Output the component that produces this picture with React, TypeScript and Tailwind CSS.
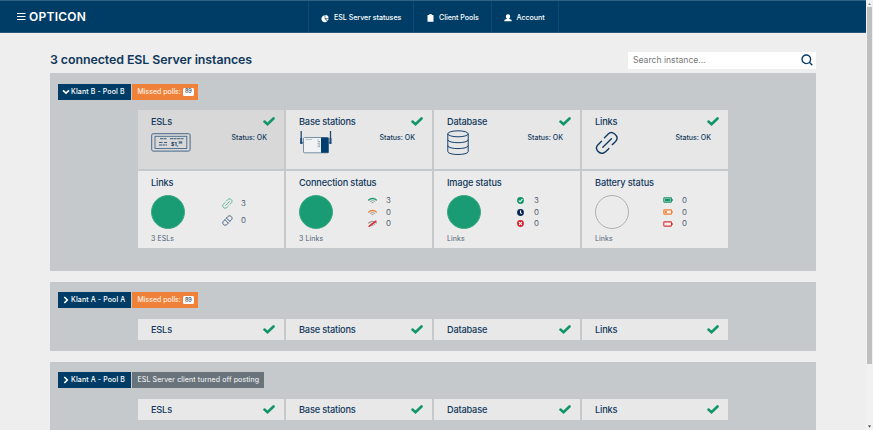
import type { ReactNode } from "react";

const CARD_NAMES = ["ESLs", "Base stations", "Database", "Links"];

function Check() {
  return (
    <svg viewBox="0 0 12 9" className="h-[9px] w-3 shrink-0">
      <path d="M1.5 4.6 4.5 7.2 10.5 1.5" fill="none" stroke="#11966b" strokeWidth="2.6" strokeLinecap="round" />
    </svg>
  );
}

function Chevron({ open }: { open?: boolean }) {
  return (
    <svg viewBox="0 0 8 8" className="size-2 shrink-0">
      <path d={open ? "M1 2.3 4 5.1 7 2.3" : "M2.3 1 5.3 4 2.3 7"} fill="none" stroke="#fff" strokeWidth="1.6" />
    </svg>
  );
}

function PieIcon() {
  return (
    <svg viewBox="0 0 9 9" className="h-[9px] w-[9px]" fill="#fff">
      <path d="M4.2.9V4.9l2.9 2.7A3.9 3.9 0 1 1 4.2.9Z" />
      <path d="M4.8.6A3.7 3.7 0 0 1 8.5 4.3H4.8ZM5.3 4.9h3.2A4 4 0 0 1 7.6 7Z" />
    </svg>
  );
}

function ClipboardIcon() {
  return (
    <svg viewBox="0 0 7 8" className="h-2 w-[7px]" fill="#fff">
      <rect x=".5" y="1" width="6" height="6.8" rx=".5" />
      <rect x="2.2" y="0" width="2.6" height="2" rx=".6" />
    </svg>
  );
}

function UserIcon() {
  return (
    <svg viewBox="0 0 8 8" className="size-2" fill="#fff">
      <path d="M4 .3c1.3 0 2.1.9 2.1 2.1 0 1-.4 1.8-1 2.2v.5l1.9.5c.5.2.7.6.7 1.7H.3c0-1.1.2-1.5.7-1.7l1.9-.5v-.5c-.6-.4-1-1.2-1-2.2C1.9 1.2 2.7.3 4 .3Z" />
    </svg>
  );
}

function LabelIcon() {
  return (
    <svg viewBox="0 0 40 19" className="h-[19px] w-10" fill="none" stroke="#45688a">
      <rect x=".7" y=".7" width="38.4" height="17.4" rx="1.5" strokeWidth="1" />
      <rect x="4" y="3.3" width="31.8" height="12.2" strokeWidth=".9" />
      <path d="M9 5.7h7M19 5.7h14M8 9.5h4M13 9.5h3M8 12h8" stroke="#234b70" strokeWidth=".9" strokeDasharray="3 .5" />
      <text x="20" y="12.7" fontSize="5.2" fontWeight="700" fill="#0d3a61" stroke="none">
        $1,<tspan fontSize="3" dy="-1.5">99</tspan>
      </text>
    </svg>
  );
}

function StationIcon() {
  return (
    <svg viewBox="0 0 33 26" className="h-[26px] w-[33px]" fill="none">
      <path d="M2.2 1v12.5M31.5 1v12.5" stroke="#1d4b76" strokeWidth="1.3" />
      <path d="M2.2 8v6M31.500 8v6" stroke="#1d4b76" strokeWidth="1.9" />
      <path d="M2.5 12.8h2M29.5 12.8h2" stroke="#1d4b76" />
      <rect x="4.5" y="7.5" width="25" height="15.3" rx="1" fill="#f1f2f3" stroke="#5d7790" strokeWidth=".8" />
      <path d="M22 7.5h7.5v15.3H22Z" fill="#003d70" />
      <path d="M6.5 9.5h6.5" stroke="#a7b2bd" strokeWidth=".8" />
      <path d="M19.2 9.5v8M20.6 11v6" stroke="#566d84" strokeWidth=".7" strokeDasharray="1 .7" />
    </svg>
  );
}

function DatabaseIcon() {
  return (
    <svg viewBox="0 0 22 26" className="h-[26px] w-[22px]" fill="none" stroke="#16426d" strokeWidth="1">
      <ellipse cx="11" cy="3.8" rx="10.2" ry="3" />
      <path d="M.8 3.800V21.500c0 4 20.400 4 20.400 0V3.800M.8 9.700c0 4 20.400 4 20.400 0M.8 15.600c0 4 20.400 4 20.400 0" />
    </svg>
  );
}

function ChainIcon({ className, color, broken }: { className: string; color: string; broken?: boolean }) {
  return (
    <svg viewBox="0 0 24 24" className={className} fill="none" stroke={color} strokeWidth={className === "size-6" ? 1.4 : 2} strokeLinecap="round">
      <path d="M9.5 6.8 13.2 3C17-.8 24 4.6 21.4 9.3c-.6 1.1-2.5 2.9-4.1 4.3M6.5 10.3 2.8 14C-1 18 4.6 24.2 9.3 21.6c1.3-.7 3-2.5 4.5-4" />
      {broken ? <path d="m6.5 10.3 7.3 7.3M9.5 6.8l7.8 6.8" /> : <path d="m7.8 16.2 8.6-8.4" />}
    </svg>
  );
}

function WifiIcon({ color, off }: { color: string; off?: boolean }) {
  return (
    <svg viewBox="0 0 9 7" className="h-[7px] w-[9px]" fill="none" strokeLinecap="round">
      <path d="M.7 3C2.7 1 6.3 1 8.3 3" stroke={off ? "#a99" : color} strokeWidth="1.3" />
      <path d="M2.2 4.4c1.3-1.1 3.3-1.1 4.6 0" stroke="#999" strokeWidth="1" />
      <path d="M3.9 5.6h1.2" stroke="#999" strokeWidth=".9" />
      {off && <path d="M1.2 6.3 7.9 1.2" stroke={color} strokeWidth="1.5" />}
    </svg>
  );
}

function DotIcon({ color, mark }: { color: string; mark: string }) {
  return (
    <svg viewBox="0 0 8 8" className="size-[7px]">
      <circle cx="4" cy="4" r="3.9" fill={color} />
      <path d={mark} fill="none" stroke="#fff" strokeWidth="1.2" />
    </svg>
  );
}

function BatteryIcon({ color, level }: { color: string; level: number }) {
  return (
    <svg viewBox="0 0 10 6" className="h-[6px] w-[10px]">
      <rect x=".8" y=".9" width="7.7" height="4.2" rx=".5" fill="#f7efec" stroke={color} strokeWidth="1.1" />
      <path d="M9.2 2v2" stroke={color} />
      <rect x="1.8" y="1.8" width={level} height="2.4" fill={color} />
    </svg>
  );
}

interface StatusCardProps {
  name: string;
  icon: ReactNode;
  active?: boolean;
}

function StatusCard({ name, icon, active }: StatusCardProps) {
  return (
    <div className={`h-[59.5px] pl-[13px] pr-[9px] pt-[6px] ${active ? "bg-[#d8d8d8]" : "bg-[#e7e7e7]"}`}>
      <div className="flex h-3 items-center justify-between">
        <h3 className="text-[9.2px] font-medium leading-3 tracking-[-0.18px]">{name}</h3>
        <Check />
      </div>
      <div className="flex justify-between">
        <div className="flex h-[30px] items-center">{icon}</div>
        <span className="mr-[8px] mt-[5px] text-[7px] font-medium leading-[10px]">Status: OK</span>
      </div>
    </div>
  );
}

interface ChartCardProps {
  name: string;
  caption: string;
  empty?: boolean;
  rows: { icon: ReactNode; value: number }[];
}

function ChartCard({ name, caption, empty, rows }: ChartCardProps) {
  return (
    <div className="h-[76.9px] bg-[#ebebeb] pl-[13px] pt-[5.5px]">
      <h3 className="text-[9.2px] font-medium leading-3 tracking-[-0.15px]">{name}</h3>
      <div className="mt-[6.5px] flex h-[34px]">
        <div className={`size-[34px] rounded-full ${empty ? "border-[1.5px] border-[#b0b0b0]" : "border border-[#3fa982] bg-[#199c73]"}`} />
        <div className={`flex flex-col justify-center ${rows.length === 2 ? "ml-[36px] gap-[6px]" : "ml-[33px] gap-[0.7px]"}`}>
          {rows.map((row, i) => (
            <div key={i} className="flex h-[11px] items-center">
              <span className="flex w-[12px] justify-center">{row.icon}</span>
              <span className="ml-[8px] text-[7.8px] leading-[11px] text-[#4d6073]">{row.value}</span>
            </div>
          ))}
        </div>
      </div>
      <p className="mt-[5px] text-[7px] leading-[9px] tracking-[0.08px] text-[#4d6073]">{caption}</p>
    </div>
  );
}

function PoolName({ name, open }: { name: string; open?: boolean }) {
  return (
    <div className="flex h-4 w-[72.5px] items-center gap-px bg-[#003d66] pl-[4px] text-[7px] font-medium text-white">
      <Chevron open={open} />
      <span className="whitespace-nowrap pt-px tracking-[0.12px]">{name}</span>
    </div>
  );
}

function MissedPolls() {
  return (
    <div className="flex h-4 w-[65.5px] items-center gap-[2px] bg-[#ef8138] pl-[5.5px] text-[7px] text-white">
      <span className="whitespace-nowrap pt-px">Missed polls:</span>
      <span className="flex h-2 w-[11px] items-center justify-center rounded-[1.5px] bg-white text-[5.5px] font-medium text-[#26364a]">89</span>
    </div>
  );
}

function PostingOff() {
  return (
    <div className="flex h-4 w-[131.5px] items-center bg-[#69737c] pl-[5.5px] text-[7px] text-white">
      <span className="whitespace-nowrap pt-px tracking-[0.11px]">ESL Server client turned off posting</span>
    </div>
  );
}

function CollapsedPool({ name, badge }: { name: string; badge: ReactNode }) {
  return (
    <section className="mt-[11px] h-[69px] bg-[#c5c9cc] pt-[10px]">
      <div className="ml-2 flex gap-[1.5px]">
        <PoolName name={name} />
        {badge}
      </div>
      <div className="ml-[88px] mt-[10.5px] grid w-[590px] grid-cols-4 gap-[2px]">
        {CARD_NAMES.map((card) => (
          <div key={card} className="flex h-[21.5px] items-center justify-between bg-[#e8e8e8] pl-[13px] pr-[9px]">
            <h3 className="pt-px text-[9.2px] font-medium tracking-[-0.18px]">{card}</h3>
            <Check />
          </div>
        ))}
      </div>
    </section>
  );
}

function NavItem({ icon, label, className }: { icon: ReactNode; label: string; className: string }) {
  return (
    <a className={`flex h-full items-center border-r border-[#114b75] pl-[12px] pt-[3px] text-[7.1px] font-medium ${className}`}>
      <span className="mr-[5px] flex w-2 justify-center">{icon}</span>
      <span className="whitespace-nowrap tracking-[-0.03px]">{label}</span>
    </a>
  );
}

export default function App() {
  return (
    <div className="flex h-[430px] w-[873px] overflow-hidden bg-[#eee] font-[Inter,sans-serif] text-[#10385c]">
      <div className="w-[866px]">
        <header className="flex h-[33px] border-b border-t border-b-[#2d5779] border-t-[#2f6283] bg-[#003d66] text-white">
          <div className="flex w-[308px] items-center pl-[17px]">
            <svg viewBox="0 0 9 9" className="mr-[3px] size-[9px]" stroke="#fff" strokeWidth="1.1">
              <path d="M0 1.5h8.5M0 4.5h8.5M0 7.5h8.5" />
            </svg>
            <span className="text-[12px] font-semibold leading-none tracking-[0.25px]">OPTICON</span>
          </div>
          <nav className="flex border-l border-[#114b75]">
            <NavItem icon={<PieIcon />} label="ESL Server statuses" className="w-[105px]" />
            <NavItem icon={<ClipboardIcon />} label="Client Pools" className="w-[77.5px]" />
            <NavItem icon={<UserIcon />} label="Account" className="w-[67px]" />
          </nav>
        </header>
        <main className="ml-[50px] w-[766px]">
          <div className="flex h-10 justify-between">
            <h1 className="mt-[19px] text-[12.4px] font-semibold leading-4 tracking-[-0.08px]">3 connected ESL Server instances</h1>
            <div className="mt-[18.5px] flex h-[17.5px] w-[188px] items-center justify-between bg-white pl-[5px] pr-[3.5px]">
              <span className="pt-px text-[8.6px] text-[#777]">Search instance...</span>
              <svg viewBox="0 0 12 12" className="size-3" fill="none" stroke="#0c3c65" strokeWidth="1.4">
                <circle cx="5.3" cy="5.3" r="4.3" />
                <path d="m8.3 8.3 3 3" />
              </svg>
            </div>
          </div>
          <section className="h-[198px] bg-[#c5c9cc] pt-[10.5px]">
            <div className="ml-2 flex gap-[1.5px]">
              <PoolName name="Klant B - Pool B" open />
              <MissedPolls />
            </div>
            <div className="ml-[88px] mt-[10px] grid w-[590px] grid-cols-4 gap-[2px]">
              <StatusCard name="ESLs" icon={<LabelIcon />} active />
              <StatusCard name="Base stations" icon={<StationIcon />} />
              <StatusCard name="Database" icon={<DatabaseIcon />} />
              <StatusCard name="Links" icon={<ChainIcon className="size-6" color="#123b63" />} />
              <ChartCard
                name="Links"
                caption="3 ESLs"
                rows={[
                  { icon: <ChainIcon className="size-[11px]" color="#4fae8c" />, value: 3 },
                  { icon: <ChainIcon className="size-[11px]" color="#3a5878" broken />, value: 0 },
                ]}
              />
              <ChartCard
                name="Connection status"
                caption="3 Links"
                rows={[
                  { icon: <WifiIcon color="#159a6f" />, value: 3 },
                  { icon: <WifiIcon color="#ee8037" />, value: 0 },
                  { icon: <WifiIcon color="#d52c35" off />, value: 0 },
                ]}
              />
              <ChartCard
                name="Image status"
                caption="Links"
                rows={[
                  { icon: <DotIcon color="#159568" mark="m2 4 1.5 1.5 2.7-3" />, value: 3 },
                  { icon: <DotIcon color="#0b2854" mark="M4 1.7v2.6l1.5 1" />, value: 0 },
                  { icon: <DotIcon color="#d8232f" mark="m2.4 2.4 3.2 3.2m0-3.2L2.4 5.6" />, value: 0 },
                ]}
              />
              <ChartCard
                name="Battery status"
                caption="Links"
                empty
                rows={[
                  { icon: <BatteryIcon color="#159568" level={5.7} />, value: 0 },
                  { icon: <BatteryIcon color="#ee8037" level={2} />, value: 0 },
                  { icon: <BatteryIcon color="#d8343d" level={0} />, value: 0 },
                ]}
              />
            </div>
          </section>
          <CollapsedPool name="Klant A - Pool A" badge={<MissedPolls />} />
          <CollapsedPool name="Klant A - Pool B" badge={<PostingOff />} />
        </main>
      </div>
      <div className="flex w-[7px] flex-col items-center bg-[#f1f1f1]">
        <svg viewBox="0 0 5 7" className="h-[7px] w-[5px]" fill="#888">
          <path d="M1 5h3L2.5 3Z" />
        </svg>
        <div className="h-[357px] w-[5px] bg-[#bfbfbf]" />
        <svg viewBox="0 0 5 7" className="mt-auto h-[7px] w-[5px]" fill="#333">
          <path d="M1 2.5h3L2.5 4.5Z" />
        </svg>
      </div>
    </div>
  );
}
